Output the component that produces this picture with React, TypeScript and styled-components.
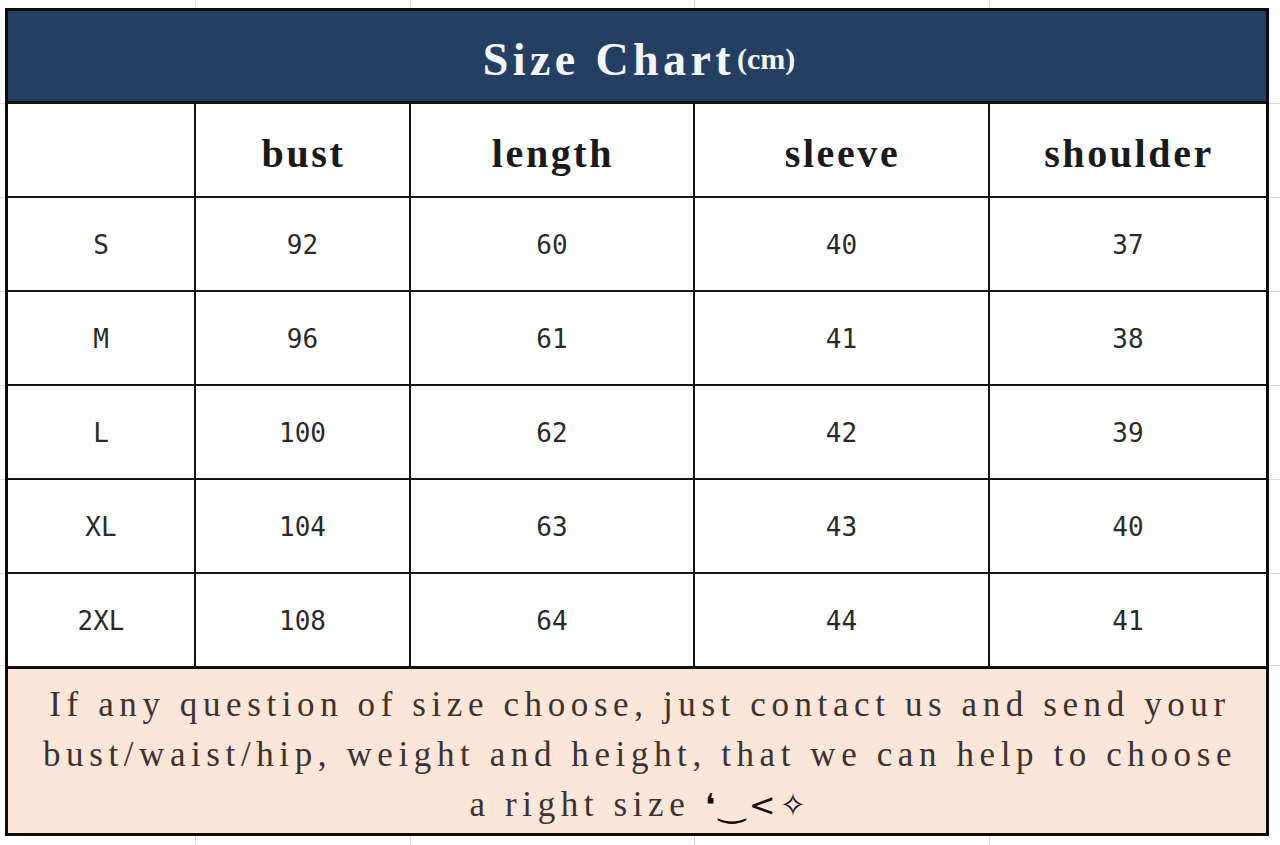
import styled, { createGlobalStyle } from "styled-components";

const columns = ["bust", "length", "sleeve", "shoulder"];

const sizeRows = [
  { size: "S", values: ["92", "60", "40", "37"] },
  { size: "M", values: ["96", "61", "41", "38"] },
  { size: "L", values: ["100", "62", "42", "39"] },
  { size: "XL", values: ["104", "63", "43", "40"] },
  { size: "2XL", values: ["108", "64", "44", "41"] },
];

// faint spreadsheet gridlines peeking out around the chart
const gridX = [195, 410, 694, 989];
const gridY = [103, 197, 291, 385, 479, 573, 665];

const sheetBackground = [
  ...gridX.map(
    (x) =>
      `linear-gradient(to right, transparent ${x}px, #d8d8d8 ${x}px, #d8d8d8 ${x + 1}px, transparent ${x + 1}px)`
  ),
  ...gridY.map(
    (y) =>
      `linear-gradient(to bottom, transparent ${y}px, #d8d8d8 ${y}px, #d8d8d8 ${y + 1}px, transparent ${y + 1}px)`
  ),
].join(", ");

const App = () => {
  return (
    <>
      <GlobalStyle />
      <Sheet>
        <ChartTable>
          <TitleCell>
            Size Chart<TitleUnit>(cm)</TitleUnit>
          </TitleCell>

          <HeadCell />
          {columns.map((col) => (
            <HeadCell key={col}>{col}</HeadCell>
          ))}

          {sizeRows.map((row) => (
            <>
              <DataCell key={row.size}>{row.size}</DataCell>
              {row.values.map((value, idx) => (
                <DataCell key={row.size + idx}>{value}</DataCell>
              ))}
            </>
          ))}

          <NoteCell>
            If any question of size choose, just contact us and send your
            <br />
            bust/waist/hip, weight and height, that we can help to choose
            <br />a right size <Emote>❛‿&lt;✧</Emote>
          </NoteCell>
        </ChartTable>
      </Sheet>
    </>
  );
};

export default App;

const GlobalStyle = createGlobalStyle`
  html, body {
    margin: 0;
    padding: 0;
    background: #fff;
  }
`;

const Sheet = styled.div`
  width: 1280px;
  height: 845px;
  box-sizing: border-box;
  padding: 8px 11px 9px 5px;
  background-color: #fff;
  background-image: ${sheetBackground};
`;

const ChartTable = styled.div`
  width: 1264px;
  height: 828px;
  box-sizing: border-box;
  border: 3px solid #0d0d0d;
  background: #111;
  display: grid;
  grid-template-columns: 186px 213px 282px 293px 276px;
  grid-template-rows: 91px repeat(6, 92px) 165px;
  gap: 2px;
`;

const TitleCell = styled.div`
  grid-column: 1 / -1;
  background: #243f62;
  border-bottom: 1px solid #0d0d0d;
  color: #f2f6fa;
  display: flex;
  align-items: center;
  justify-content: center;
  padding: 6px 0 0 4px;
  font-family: "Liberation Serif", "DejaVu Serif", serif;
  font-weight: bold;
  font-size: 46px;
  letter-spacing: 4.4px;
`;

const TitleUnit = styled.span`
  font-size: 30px;
  letter-spacing: 0;
  margin-left: 2px;
`;

const HeadCell = styled.div`
  background: #fff;
  display: flex;
  align-items: center;
  justify-content: center;
  padding: 6px 0 0 2px;
  font-family: "Liberation Serif", "DejaVu Serif", serif;
  font-weight: bold;
  font-size: 40px;
  letter-spacing: 2.6px;
  color: #1a1a1a;
`;

const DataCell = styled.div`
  background: #fff;
  display: flex;
  align-items: center;
  justify-content: center;
  padding-top: 2px;
  font-family: "DejaVu Sans Mono", "Liberation Mono", monospace;
  font-size: 26px;
  color: #2a2a2a;
`;

const NoteCell = styled.div`
  grid-column: 1 / -1;
  background: #fce6d9;
  border-top: 1px solid #0d0d0d;
  padding: 11px 0 0 6px;
  text-align: center;
  white-space: nowrap;
  font-family: "Liberation Serif", "DejaVu Serif", serif;
  font-size: 35px;
  line-height: 50px;
  letter-spacing: 5.6px;
  color: #3a3430;
`;

const Emote = styled.span`
  font-family: "DejaVu Sans", sans-serif;
  font-size: 32px;
  color: #111;
  letter-spacing: 4px;
`;
